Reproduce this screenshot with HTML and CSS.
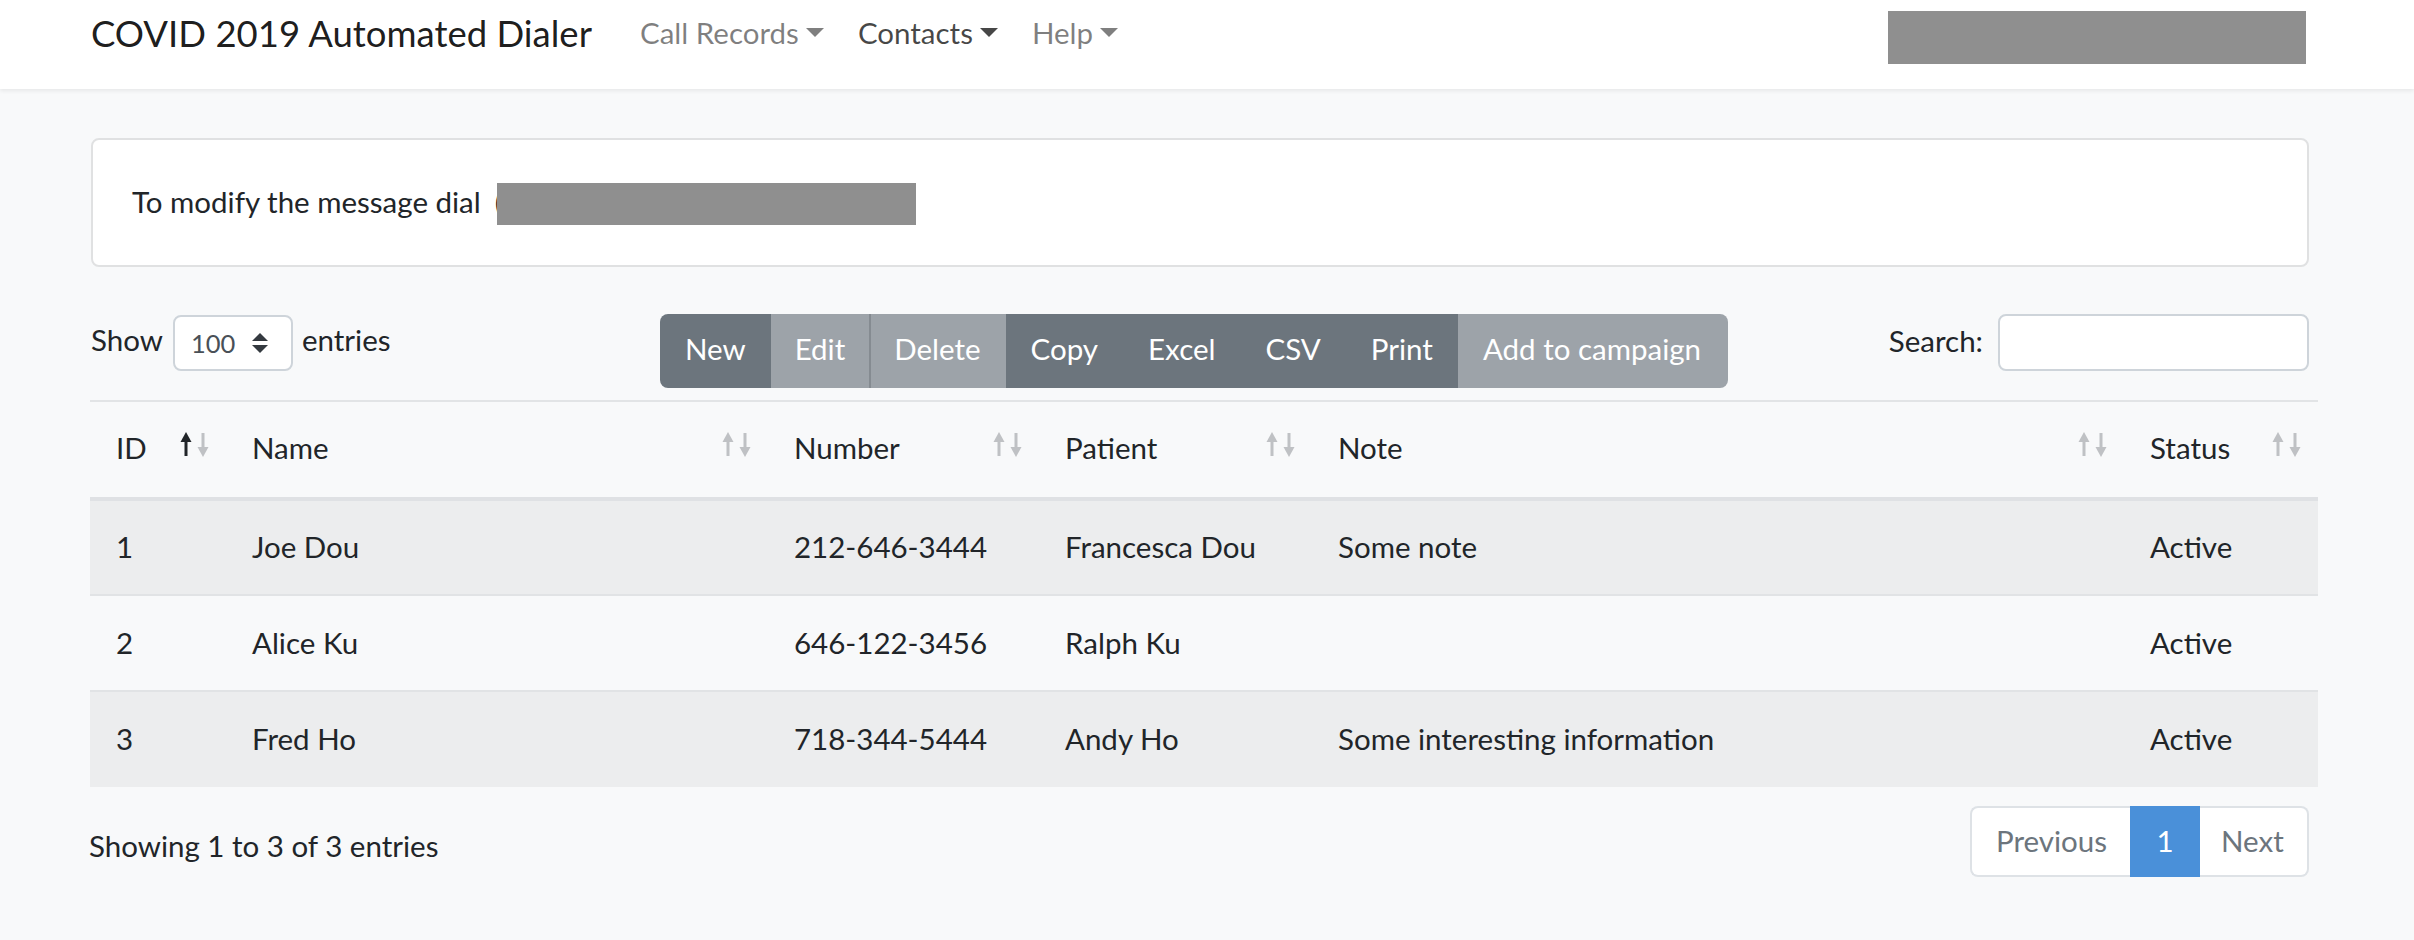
FILE: index.html
```html
<!DOCTYPE html>
<html lang="en">
<head>
<meta charset="utf-8">
<title>COVID 2019 Automated Dialer</title>
<link rel="stylesheet" href="styles.css">
</head>
<body>
<nav class="navbar">
  <div class="container nav-inner">
    <a class="brand">COVID 2019 Automated Dialer</a>
    <ul class="nav">
      <li class="nav-link">Call Records<span class="caret"></span></li>
      <li class="nav-link active">Contacts<span class="caret"></span></li>
      <li class="nav-link">Help<span class="caret"></span></li>
    </ul>
    <div class="nav-redact"></div>
  </div>
</nav>

<main class="container main">
  <div class="card">
    <p class="card-text">To modify the message dial<span class="paren">(</span><span class="redact"></span></p>
  </div>

  <div class="toolbar">
    <div class="length">
      <span class="label">Show</span>
      <div class="select">
        <span class="select-val">100</span>
        <svg class="select-arrows" width="16" height="20" viewBox="0 0 16 20"><polygon points="8,0 16,8 0,8" fill="#343a40"/><polygon points="0,12 16,12 8,20" fill="#343a40"/></svg>
      </div>
      <span class="label">entries</span>
    </div>
    <div class="btn-group">
      <span class="btn">New</span>
      <span class="btn disabled edit">Edit</span>
      <span class="btn disabled sep">Delete</span>
      <span class="btn">Copy</span>
      <span class="btn">Excel</span>
      <span class="btn">CSV</span>
      <span class="btn">Print</span>
      <span class="btn disabled last">Add to campaign</span>
    </div>
    <div class="search">
      <span class="label-s">Search:</span>
      <div class="search-input"></div>
    </div>
  </div>

  <div class="table-wrap">
    <table class="table">
      <colgroup>
        <col class="c-id"><col class="c-name"><col class="c-num"><col class="c-pat"><col class="c-note"><col class="c-status">
      </colgroup>
      <thead>
        <tr>
          <th>ID<svg class="sort" viewBox="0 0 30 25" width="30" height="25"><path d="M6 7 V24" stroke="#212529" stroke-width="3"/><polygon points="0.5,10 6,0 11.5,10" fill="#212529"/><path d="M23 1 V18" stroke="#bfc1c4" stroke-width="3"/><polygon points="17.5,15 23,25 28.5,15" fill="#bfc1c4"/></svg></th>
          <th>Name<svg class="sort" viewBox="0 0 30 25" width="30" height="25"><path d="M6 7 V24" stroke="#bfc1c4" stroke-width="3"/><polygon points="0.5,10 6,0 11.5,10" fill="#bfc1c4"/><path d="M23 1 V18" stroke="#bfc1c4" stroke-width="3"/><polygon points="17.5,15 23,25 28.5,15" fill="#bfc1c4"/></svg></th>
          <th>Number<svg class="sort" viewBox="0 0 30 25" width="30" height="25"><path d="M6 7 V24" stroke="#bfc1c4" stroke-width="3"/><polygon points="0.5,10 6,0 11.5,10" fill="#bfc1c4"/><path d="M23 1 V18" stroke="#bfc1c4" stroke-width="3"/><polygon points="17.5,15 23,25 28.5,15" fill="#bfc1c4"/></svg></th>
          <th>Patient<svg class="sort" viewBox="0 0 30 25" width="30" height="25"><path d="M6 7 V24" stroke="#bfc1c4" stroke-width="3"/><polygon points="0.5,10 6,0 11.5,10" fill="#bfc1c4"/><path d="M23 1 V18" stroke="#bfc1c4" stroke-width="3"/><polygon points="17.5,15 23,25 28.5,15" fill="#bfc1c4"/></svg></th>
          <th>Note<svg class="sort" viewBox="0 0 30 25" width="30" height="25"><path d="M6 7 V24" stroke="#bfc1c4" stroke-width="3"/><polygon points="0.5,10 6,0 11.5,10" fill="#bfc1c4"/><path d="M23 1 V18" stroke="#bfc1c4" stroke-width="3"/><polygon points="17.5,15 23,25 28.5,15" fill="#bfc1c4"/></svg></th>
          <th>Status<svg class="sort" viewBox="0 0 30 25" width="30" height="25"><path d="M6 7 V24" stroke="#bfc1c4" stroke-width="3"/><polygon points="0.5,10 6,0 11.5,10" fill="#bfc1c4"/><path d="M23 1 V18" stroke="#bfc1c4" stroke-width="3"/><polygon points="17.5,15 23,25 28.5,15" fill="#bfc1c4"/></svg></th>
        </tr>
      </thead>
      <tbody>
        <tr class="odd"><td>1</td><td>Joe Dou</td><td>212-646-3444</td><td>Francesca Dou</td><td>Some note</td><td>Active</td></tr>
        <tr><td>2</td><td>Alice Ku</td><td>646-122-3456</td><td>Ralph Ku</td><td></td><td>Active</td></tr>
        <tr class="odd"><td>3</td><td>Fred Ho</td><td>718-344-5444</td><td>Andy Ho</td><td>Some interesting information</td><td>Active</td></tr>
      </tbody>
    </table>
  </div>

  <div class="table-footer">
    <div class="info">Showing 1 to 3 of 3 entries</div>
    <ul class="pagination">
      <li class="page prev">Previous</li>
      <li class="page active">1</li>
      <li class="page next">Next</li>
    </ul>
  </div>
</main>
</body>
</html>
```
FILE: styles.css
```css
* { box-sizing: border-box; }

body {
  margin: 0;
  background: #f8f9fa;
  color: #212529;
  font-family: "Lato", "Liberation Sans", sans-serif;
  font-size: 29.5px;
  line-height: 1.5;
}

.container {
  width: 2218px;
  margin-left: 91px;
}

/* navbar */
.navbar {
  height: 89px;
  background: #fff;
  box-shadow: 0 2px 4px rgba(0, 0, 0, 0.07);
}

.nav-inner {
  display: flex;
  align-items: center;
  height: 67px;
}

.brand {
  font-size: 36.5px;
  color: rgba(0, 0, 0, 0.9);
  margin-right: 31px;
  white-space: nowrap;
}

.nav {
  display: flex;
  list-style: none;
  margin: 0;
  padding: 0;
}

.nav-link {
  padding: 0 17px;
  color: rgba(0, 0, 0, 0.5);
  display: flex;
  align-items: center;
}

.nav-link.active {
  color: rgba(0, 0, 0, 0.72);
}

.caret {
  display: inline-block;
  margin-left: 7px;
  width: 0;
  height: 0;
  border-top: 9px solid currentColor;
  border-left: 9px solid transparent;
  border-right: 9px solid transparent;
  position: relative;
  top: -1px;
}

.nav-redact {
  margin-left: auto;
  margin-right: 3px;
  margin-top: 8px;
  width: 418px;
  height: 53px;
  background: #8f8f8f;
}

/* card */
.main {
  padding-top: 49px;
}

.card {
  background: #fff;
  border: 2px solid #e0e1e2;
  border-radius: 8px;
  height: 129px;
  display: flex;
  align-items: center;
  padding-left: 39px;
}

.card-text {
  margin: 0;
  display: flex;
  align-items: center;
  white-space: pre;
}

.paren {
  margin-left: 14px;
}

.redact {
  display: inline-block;
  width: 419px;
  height: 42px;
  background: #8f8f8f;
  margin-left: -6px;
  position: relative;
  top: 1px;
}

/* toolbar */
.toolbar {
  margin-top: 47px;
  display: grid;
  grid-template-columns: 1fr auto 1fr;
  align-items: start;
  height: 74px;
}

.length {
  display: flex;
  align-items: center;
  height: 58px;
}

.label {
  padding-bottom: 6px;
}

.label-s {
  padding-bottom: 3px;
}

.select {
  width: 120px;
  height: 56px;
  margin: 0 9px 0 10px;
  background: #fff;
  border: 2px solid #ced4da;
  border-radius: 8px;
  display: flex;
  align-items: center;
  padding-left: 16px;
  font-size: 25.5px;
  color: #495057;
}

.select-val {
  width: 61px;
}

.select-arrows {
  display: block;
}

.btn-group {
  display: flex;
  height: 74px;
  border-radius: 8px;
  overflow: hidden;
  margin-right: 12px;
}

.btn {
  display: flex;
  align-items: center;
  padding: 0 25px 3px;
  background: #6c757d;
  color: #fff;
  white-space: nowrap;
}

.btn.edit {
  padding-left: 24px;
  padding-right: 24px;
}

.btn.last {
  padding-right: 27px;
}

.btn.disabled {
  background: #9da3a9;
}

.btn.sep {
  border-left: 2px solid #858b91;
  padding-left: 23px;
}

.search {
  justify-self: end;
  display: flex;
  align-items: center;
  height: 57px;
}

.search-input {
  margin-left: 15px;
  width: 311px;
  height: 57px;
  background: #fff;
  border: 2px solid #ced4da;
  border-radius: 8px;
}

/* table */
.table-wrap {
  margin-top: 12px;
  margin-right: -9px;
  margin-left: -1px;
}

.table {
  width: 100%;
  table-layout: fixed;
  border-collapse: collapse;
}

.c-id { width: 136px; }
.c-name { width: 542px; }
.c-num { width: 271px; }
.c-pat { width: 273px; }
.c-note { width: 812px; }
.c-status { width: 194px; }

.table th {
  position: relative;
  text-align: left;
  font-weight: 400;
  height: 98px;
  padding: 0 26px 2px;
  border-top: 2px solid #e2e4e6;
  border-bottom: 4px solid #dfe1e4;
  white-space: nowrap;
}

.sort {
  position: absolute;
  right: 16px;
  top: 30px;
}

.table td {
  height: 96px;
  padding: 0 26px;
  border-top: 2px solid #e1e3e5;
  white-space: nowrap;
}

.table tr.odd td {
  background: #ecedee;
}

/* footer */
.table-footer {
  margin-top: 19px;
  display: flex;
  justify-content: space-between;
  align-items: flex-start;
}

.info {
  padding-top: 18px;
  margin-left: -2px;
}

.pagination {
  display: flex;
  list-style: none;
  margin: 0;
  padding: 0;
  height: 71px;
}

.page {
  display: flex;
  align-items: center;
  background: #fff;
  border: 2px solid #dee2e6;
  color: #6c757d;
  padding: 0 23px;
}

.page.prev {
  width: 160px;
  padding-left: 24px;
  border-radius: 8px 0 0 8px;
  border-right: 0;
}

.page.active {
  width: 70px;
  justify-content: center;
  background: #4a90d9;
  border-color: #4a90d9;
  color: #fff;
  padding: 0;
}

.page.next {
  width: 109px;
  padding-left: 21px;
  border-left: 0;
  border-radius: 0 8px 8px 0;
}
```
